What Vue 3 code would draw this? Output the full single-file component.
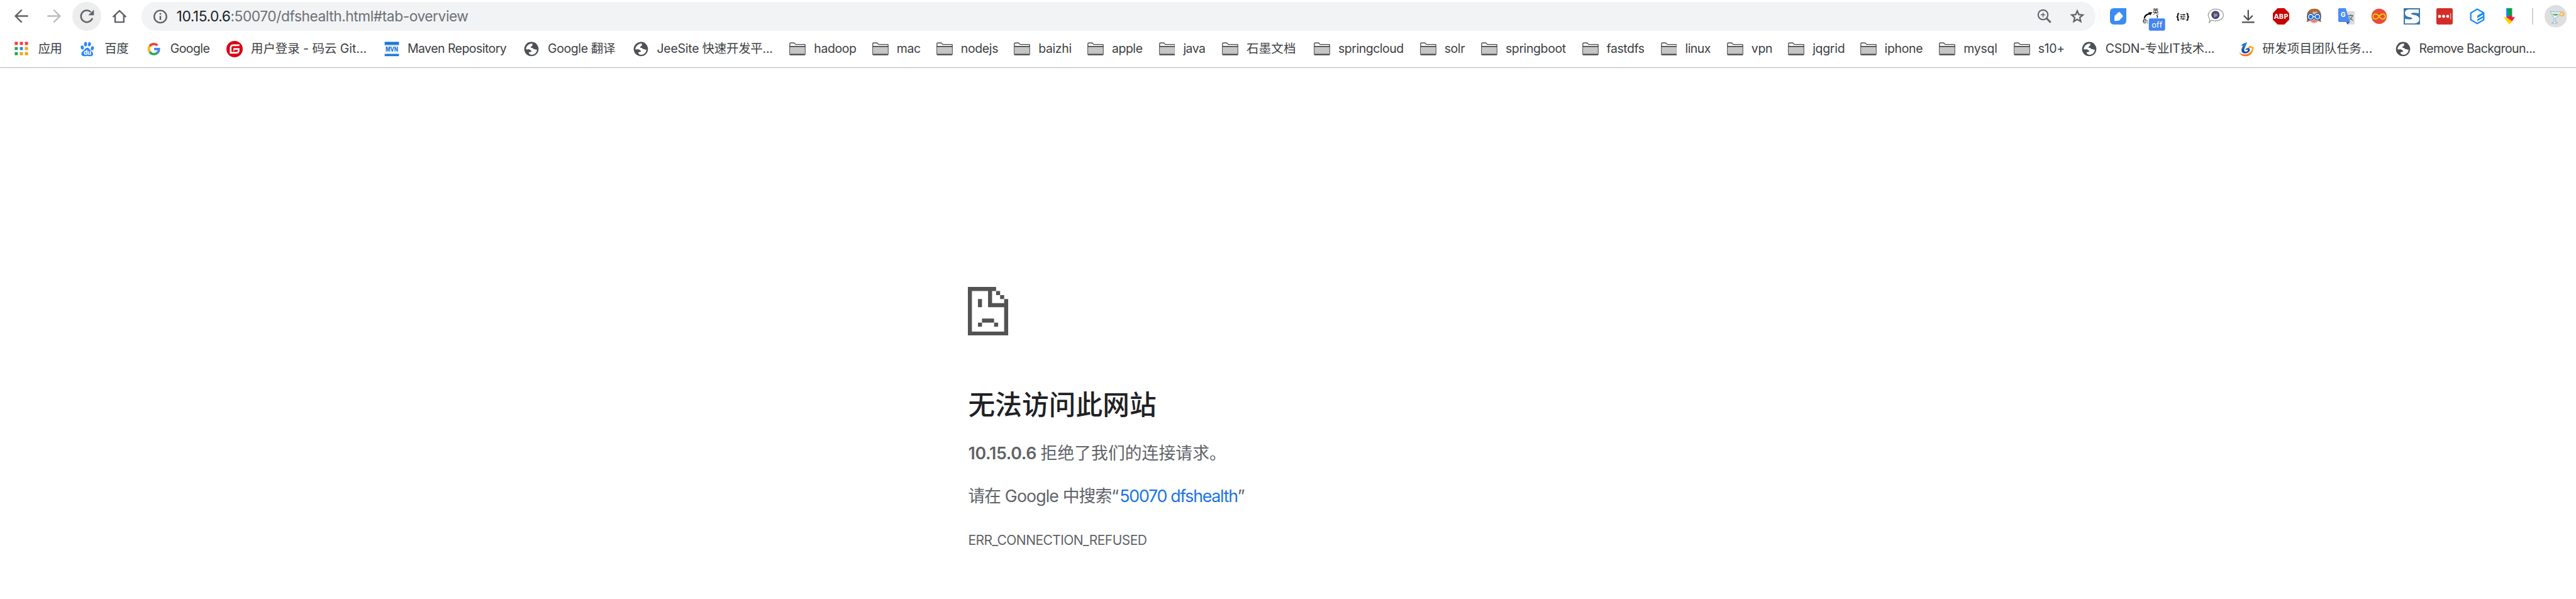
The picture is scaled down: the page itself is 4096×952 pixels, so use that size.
<script setup>
// Bookmark geometry: x = icon slot, tx/tw = label start and width
const bookmarks = [
  { icon: 'apps', text: '应用', x: 26, tx: 75, tw: 46 },
  { icon: 'baidu', text: '百度', x: 156, tx: 205, tw: 47 },
  { icon: 'google', text: 'Google', x: 286, tx: 334, tw: 77 },
  { icon: 'gitee', text: '用户登录 - 码云 Git...', x: 444, tx: 492, tw: 227 },
  { icon: 'maven', text: 'Maven Repository', x: 752, tx: 799, tw: 194 },
  { icon: 'globe', text: 'Google 翻译', x: 1026, tx: 1074, tw: 132 },
  { icon: 'globe', text: 'JeeSite 快速开发平...', x: 1240, tx: 1288, tw: 227 },
  { icon: 'folder', text: 'hadoop', x: 1548, tx: 1596, tw: 83 },
  { icon: 'folder', text: 'mac', x: 1710, tx: 1758, tw: 47 },
  { icon: 'folder', text: 'nodejs', x: 1836, tx: 1884, tw: 73 },
  { icon: 'folder', text: 'baizhi', x: 1988, tx: 2036, tw: 65 },
  { icon: 'folder', text: 'apple', x: 2132, tx: 2180, tw: 60 },
  { icon: 'folder', text: 'java', x: 2272, tx: 2320, tw: 43 },
  { icon: 'folder', text: '石墨文档', x: 2396, tx: 2444, tw: 97 },
  { icon: 'folder', text: 'springcloud', x: 2576, tx: 2624, tw: 128 },
  { icon: 'folder', text: 'solr', x: 2784, tx: 2832, tw: 40 },
  { icon: 'folder', text: 'springboot', x: 2904, tx: 2952, tw: 118 },
  { icon: 'folder', text: 'fastdfs', x: 3102, tx: 3150, tw: 74 },
  { icon: 'folder', text: 'linux', x: 3256, tx: 3304, tw: 50 },
  { icon: 'folder', text: 'vpn', x: 3386, tx: 3434, tw: 41 },
  { icon: 'folder', text: 'jqgrid', x: 3506, tx: 3554, tw: 63 },
  { icon: 'folder', text: 'iphone', x: 3648, tx: 3695, tw: 75 },
  { icon: 'folder', text: 'mysql', x: 3802, tx: 3850, tw: 66 },
  { icon: 'folder', text: 's10+', x: 3948, tx: 3996, tw: 52 },
  { icon: 'globe', text: 'CSDN-专业IT技术...', x: 4080, tx: 4128, tw: 214 },
  { icon: 'swirl', text: '研发项目团队任务...', x: 4388, tx: 4436, tw: 216 },
  { icon: 'globe', text: 'Remove Backgroun...', x: 4696, tx: 4743, tw: 228 },
].map((b, i, all) => ({
  ...b,
  lead: i ? b.x - all[i - 1].tx - all[i - 1].tw : b.x,
  gap: b.tx - b.x - 32,
}))

const extensions = [
  'tag', 'translate-off', 'braces', 'bubble', 'download', 'abp', 'girl',
  'gtranslate', 'infinity', 'letter-s', 'dots', 'cube', 'arrow',
]

// Tracks the text so that it exactly fills its parent's width
const vFit = {
  mounted(el) {
    const width = () => el.getBoundingClientRect().width
    const target = el.parentElement.getBoundingClientRect().width
    el.style.letterSpacing = '0px'
    const base = width()
    el.style.letterSpacing = '1px'
    const step = width() - base
    el.style.letterSpacing = `${(target - base) / step}px`
  },
}
</script>

<template>
  <div class="window">
    <svg class="sprite" width="0" height="0" aria-hidden="true">
      <defs>
        <linearGradient id="g-orange" x1="0" y1="1" x2="1" y2="0">
          <stop offset="0" stop-color="#ee5a22" /><stop offset="1" stop-color="#fdb515" />
        </linearGradient>
        <linearGradient id="g-blue" x1="0" y1="0" x2="0" y2="1">
          <stop offset="0" stop-color="#2e8be0" /><stop offset="1" stop-color="#173a92" />
        </linearGradient>
        <radialGradient id="g-photo">
          <stop offset="0" stop-color="#b3766c" /><stop offset=".45" stop-color="#5a5470" /><stop offset="1" stop-color="#2b3b78" />
        </radialGradient>
      </defs>

      <symbol id="i-back" viewBox="0 0 32 32">
        <path d="M28 15.500H5M16 4L4.500 15.500L16 27" fill="none" stroke="currentColor" stroke-width="3" stroke-linecap="round" />
      </symbol>
      <symbol id="i-forward" viewBox="0 0 32 32">
        <path d="M4 15.500H27M16 4L27.500 15.500L16 27" fill="none" stroke="currentColor" stroke-width="3" stroke-linecap="round" />
      </symbol>
      <symbol id="i-reload" viewBox="0 0 32 32">
        <path d="M24 7.500A11.500 11.500 0 1 0 27 19.500" fill="none" stroke="currentColor" stroke-width="3" />
        <path d="M30 3V14H19Z" fill="currentColor" />
      </symbol>
      <symbol id="i-home" viewBox="0 0 32 32">
        <path d="M4 16.500L16 5L28 16.500M7.500 14V27.300H24.500V14" fill="none" stroke="currentColor" stroke-width="3" stroke-linejoin="round" stroke-linecap="round" />
      </symbol>
      <symbol id="i-info" viewBox="0 0 32 32">
        <circle cx="16" cy="16.500" r="12" fill="none" stroke="currentColor" stroke-width="3" />
        <path d="M14.500 9.500h3v3h-3zM14.500 15h3v8h-3z" fill="currentColor" />
      </symbol>
      <symbol id="i-zoom" viewBox="0 0 32 32">
        <circle cx="13" cy="13" r="9.500" fill="none" stroke="currentColor" stroke-width="2.600" />
        <path d="M19.500 19.500L28 28" stroke="currentColor" stroke-width="3.600" />
        <path d="M13 8.500v9M8.500 13h9" stroke="currentColor" stroke-width="1.800" />
      </symbol>
      <symbol id="i-star" viewBox="0 0 32 32">
        <path d="M16 5.500L19.100 12.600L26.900 13.300L21 18.400L22.800 26L16 22L9.200 26L11 18.400L5.100 13.300L12.900 12.600Z" fill="none" stroke="currentColor" stroke-width="2.800" />
      </symbol>

      <symbol id="i-apps" viewBox="0 0 32 32">
        <path d="M3 2h6v6H3zM13 2h6v6h-6zM23 2h6v6h-6z" fill="#f93a37" />
        <path d="M3 12h6v6H3zM3 22h6v6H3z" fill="#2fa05a" />
        <path d="M13 12h6v6h-6z" fill="#1e8cfa" />
        <path d="M23 12h6v6h-6zM13 22h6v6h-6zM23 22h6v6h-6z" fill="#f2a600" />
      </symbol>
      <symbol id="i-baidu" viewBox="0 0 32 32">
        <g fill="#2e85fb">
          <ellipse cx="12.300" cy="6.500" rx="2.900" ry="4.200" />
          <ellipse cx="20" cy="6.500" rx="2.900" ry="4.200" transform="rotate(10 20 6.500)" />
          <ellipse cx="6" cy="13" rx="3" ry="4.100" transform="rotate(-12 6 13)" />
          <ellipse cx="25.600" cy="14.500" rx="3" ry="4" transform="rotate(8 25.600 14.500)" />
          <path d="M15.700 13.200c3 0 4.500 3.300 6.600 5.300c2 1.900 5 3.700 4.800 7.300c-.2 3.300-3 4.400-5.400 4.200c-2.300-.1-4-.5-6-.5s-4 .6-6 .6c-2.400 0-5.400-.9-5.500-4.700c-.1-3.400 2.800-5 4.800-6.900c2.200-2.100 3.700-5.300 6.700-5.300z" />
        </g>
      </symbol>
      <symbol id="i-google" viewBox="0 0 32 32">
        <g fill="none" stroke-width="4.600">
          <path d="M7.500 10.500A9.700 9.700 0 0 1 22.700 9" stroke="#ea4335" />
          <path d="M7.600 21.300A9.700 9.700 0 0 1 7.600 10.300" stroke="#fbbc05" />
          <path d="M22.600 23.300A9.700 9.700 0 0 1 7.500 21.200" stroke="#34a853" />
          <path d="M16.200 16H25.500A9.700 9.700 0 0 1 22.300 23.500" stroke="#4285f4" />
        </g>
      </symbol>
      <symbol id="i-gitee" viewBox="0 0 32 32">
        <circle cx="16" cy="16" r="16" fill="#da0014" />
        <path d="M25.500 8.500H13.500Q8.300 8.500 8.300 13.500V23.300H19.500Q24 23.300 24 19V15.800H14.500" fill="none" stroke="#fff" stroke-width="3.300" />
        <path d="M14.500 14.200v6" stroke="#fff" stroke-width="1.500" />
      </symbol>
      <symbol id="i-maven" viewBox="0 0 32 32">
        <path d="M2 2h28v6H2zM2 26h28v4H2z" fill="#1976d8" />
        <path d="M2 8h28v2H2zM2 23h28v3H2z" fill="#cfdde8" />
      </symbol>
      <symbol id="i-globe" viewBox="0 0 32 32">
        <circle cx="16" cy="16" r="14" fill="#4d5156" />
        <path d="M18.500 5.500C13 4.500 6.500 8.500 5.300 15.500C5 17 7 17 9 16.500C12 16 13 17.500 15 18.500C17 19.500 16 21.500 14 21.500L10.800 22.500C11 25 13.500 27.300 17 27.200C23 27 26.500 22.500 27 17L24.500 17.300C23.500 15.500 21 17 19.500 15.500C18.800 14 17 13.500 15 13.700C14 11.500 16 11 17.500 9.700C18.500 8.800 17.500 7.500 18.500 5.500Z" fill="#fff" />
      </symbol>
      <symbol id="i-folder" viewBox="0 0 32 32">
        <path d="M1 26V5.500Q1 4 2.500 4H9Q10 4 10.700 5L12.300 7H30Q31 7 31 8V26Q31 27 30 27H2Q1 27 1 26Z" fill="#fff" stroke="#464646" stroke-width="1.600" />
        <path d="M2 12h28V26H2z" fill="#c6c6c6" />
        <path d="M2 24h28V26H2z" fill="#a3a3a3" />
        <path d="M1 10h30v2H1zM1 26h30v2H1z" fill="#464646" />
      </symbol>
      <symbol id="i-swirl" viewBox="0 0 32 32">
        <path d="M1.500 21.500C5 27 17 28.500 23 22.500C27 18.500 27.500 15 25.500 13.500L19.500 14.500C19.500 10.500 22 9 25 10.500C27 11.500 28.500 12.500 31 11.500C29 14 30 21 25.500 25.500C18 33 5 31 1.500 21.500Z" fill="url(#g-orange)" />
        <path d="M17.500 2.500C14.500 4 8 4.500 5.500 9.500L9.500 9C7 14 4.500 18.500 8 22.500C11.500 26 20 24.500 22.500 19.500C24 15.500 20.500 12.500 16.500 14.500C14.500 15.500 14 17 14.200 18.500C16 16.800 19.300 16.500 18.700 18.700C17.500 21.200 12.500 22 11.800 19C11 15 16 8 17.500 2.500Z" fill="url(#g-blue)" />
      </symbol>

      <symbol id="i-tag" viewBox="0 0 32 32">
        <path d="M8 0H32V24Q32 32 24 32H8Q0 32 0 24V8Q0 0 8 0Z" fill="#398cf1" />
        <path d="M17.500 7.500Q18.500 7 19.500 8L25 14.500Q25.500 15.500 25 16.500L18 24.500L10 25Q8.500 25 8.500 23.500L9 15Z" fill="#fff" />
      </symbol>
      <symbol id="i-translate-off" viewBox="0 0 48 48">
        <path d="M2 20C3 14 7 11 12 10L11 8L19 8L15 14L13.500 12.200C9 13 6 15 4.500 20Z" fill="#000" />
        <path d="M27 14Q31 15 28 19" fill="none" stroke="#000" stroke-width="1.500" />
        <path d="M9.300 23v8" stroke="#888" stroke-width="1" />
        <rect x="12" y="20" width="32" height="24" rx="3" fill="#4285f4" />
      </symbol>
      <symbol id="i-braces" viewBox="0 0 32 32">
        <g fill="none" stroke="#111" stroke-width="2.400">
          <path d="M8.500 10.500H7.800Q6 10.500 6 12.500V14.500Q6 17 3.500 17Q6 17 6 19.500V21.500Q6 23.500 7.800 23.500H8.500" />
          <path d="M23 10.500H23.700Q25.500 10.500 25.500 12.500V14.500Q25.500 17 28 17Q25.500 17 25.500 19.500V21.500Q25.500 23.500 23.700 23.500H23" />
          <path d="M10.500 13h10.500M10.500 17h10.500M10.500 21h10.500" stroke-width="1.400" />
          <path d="M18 11v4M13 15v4M16.500 19v4" stroke-width="1.400" />
        </g>
      </symbol>
      <symbol id="i-bubble" viewBox="0 0 32 32">
        <path d="M4 20.500C-2 13 4 1.800 16.500 1.800C25 1.800 31.200 6.500 31.200 13.500C31.200 20 25 24.800 16.500 24.800C12.500 24.800 9.500 24 8 23.500L2.500 29C4.500 26 5 23 4 20.500Z" fill="#fff" stroke="#999" stroke-width="1.500" />
        <circle cx="15.700" cy="13.200" r="8" fill="url(#g-photo)" />
        <path d="M12 9l3 3l4-2l1 5l-4 1l-3 4z" fill="#d5cde0" opacity=".4" />
      </symbol>
      <symbol id="i-download" viewBox="0 0 32 32">
        <path d="M15.800 3.500V22M7.200 14.500L15.800 23L24.400 14.500M3.500 27.700H28" fill="none" stroke="#4d4d4d" stroke-width="2.700" />
      </symbol>
      <symbol id="i-abp" viewBox="0 0 32 32">
        <path d="M9.500 0H22.500L32 9.500V22.500L22.500 32H9.500L0 22.500V9.500Z" fill="#c80000" />
      </symbol>
      <symbol id="i-girl" viewBox="0 0 32 32">
        <path d="M1.800 27C4 23 2.500 17 3 12C4 4.500 10 1 17 1C25 1 30 5 30.500 13C30.500 19 29 23 31 27L24 25H9Z" fill="#a86a37" />
        <path d="M7 14Q14 12 15 6Q18 9 21 6L26 14V22Q24 30 16.500 30Q9 29 7 22Z" fill="#e9b398" />
        <path d="M11 25.200Q16.500 28 22 25.200Q16.500 23.600 11 25.200Z" fill="#c8557c" />
        <g fill="#1b7cf0" stroke="#fff" stroke-width="2">
          <circle cx="10" cy="16.700" r="4.800" /><circle cx="23.300" cy="16.700" r="4.800" />
        </g>
        <g fill="none" stroke="#1450a0" stroke-width="1.700">
          <circle cx="10" cy="16.700" r="6.300" /><circle cx="23.300" cy="16.700" r="6.300" />
        </g>
        <path d="M14.500 16.700h4" stroke="#fff" stroke-width="1.800" />
      </symbol>
      <symbol id="i-gtranslate" viewBox="0 0 32 32">
        <path d="M14 5.500H30Q32 5.500 32 7.500V30Q32 32 30 32H18Z" fill="#dcdcdc" />
        <path d="M15.500 26.500H23L18 32Z" fill="#3548c0" />
        <path d="M2 0H14.500L23 27H2Q0 27 0 25V2Q0 0 2 0Z" fill="#4c8bf5" />
        <path d="M19 14.500h10.500M24.500 12v2.500M28 15Q26 21 20.500 24M21.500 17Q24 22 29 24" fill="none" stroke="#57717c" stroke-width="1.600" />
      </symbol>
      <symbol id="i-infinity" viewBox="0 0 32 32">
        <circle cx="16" cy="16" r="15" fill="#e84c3d" />
        <path d="M16 16C13 12 11 11.200 8.600 11.300C2.500 12 2.500 20.500 8.600 21.200C11 21.300 13 20.500 16 16C19 11.700 21 11.200 23.400 11.300C29.500 12 29.500 20.500 23.400 21.200C21 21.300 19 20.500 16 16Z" fill="none" stroke="#f7c600" stroke-width="2.400" />
      </symbol>
      <symbol id="i-letter-s" viewBox="0 0 32 32">
        <rect width="32" height="32" fill="#3a78ad" />
        <path d="M29.500 2.500H12C5 2.500 2.500 5.500 2.500 9.500C2.500 14 6 16.500 12 17.500C17 18.300 18 20.500 15 21.500C12 22.300 7 21.500 2.500 20.500V30H18C26 30 30.500 27 30.500 21.500C30.500 17 27 14.500 21.500 13.500C14 12 13 10.500 16 9.500C19 8.700 25 9 29.500 10Z" fill="#fff" />
      </symbol>
      <symbol id="i-dots" viewBox="0 0 32 32">
        <rect width="32" height="32" rx="3" fill="#d32d27" />
        <g fill="#fff"><circle cx="6.200" cy="16" r="3" /><circle cx="14.200" cy="16" r="3" /><circle cx="22.200" cy="16" r="3" /></g>
        <path d="M28 10v12" stroke="#f1b5b3" stroke-width="1.600" />
      </symbol>
      <symbol id="i-cube" viewBox="0 0 32 32">
        <path d="M28.700 9.300L16 1.800L3.300 9.300V22.700L16 30.200L28.700 22.700Z" fill="none" stroke="#1989fa" stroke-width="2.800" />
        <path d="M16 16.500Q16 15 17.300 14L29 7.500V11.500L16 19.500ZM16 24Q16 22 17.300 21L28 15V18.500L16 25.700Z" fill="#1989fa" />
      </symbol>
      <symbol id="i-arrow" viewBox="0 0 32 32">
        <path d="M10 0H14L17 16L10 18.500Z" fill="#0f8fe0" />
        <path d="M12.500 0H21.500V18H16L15.500 14Z" fill="#00a63a" />
        <path d="M5 18H12L22 25.500L16 32Z" fill="#ffd400" />
        <path d="M10.500 18L20.500 13.500L21.500 17.500H27L21.500 25.500Z" fill="#ff1635" />
      </symbol>
      <symbol id="i-cocktail" viewBox="0 0 44 44">
        <circle cx="22" cy="22" r="22" fill="#dedede" />
        <circle cx="34" cy="17.500" r="5" fill="#f9bb62" /><circle cx="33" cy="17.500" r="2.600" fill="#ffdca0" />
        <path d="M11.500 12.500Q22 15 30.500 13L31.500 15Q28 22 21.500 25.500L21.800 33.500L25.500 35Q19 37.500 13.500 35L18.500 33.300L18.800 25.500Q13 19 11.500 12.500Z" fill="#edf7fd" stroke="#7fb3d8" stroke-width="1.200" />
        <path d="M15 16.500Q21 18 27.500 16.500L25.500 20Q20 22 16.500 19.500Z" fill="#7fa76a" />
      </symbol>
    </svg>

    <header class="toolbar">
      <nav class="nav">
        <span class="nav-button"><svg class="icon"><use href="#i-back" /></svg></span>
        <span class="nav-button disabled"><svg class="icon"><use href="#i-forward" /></svg></span>
        <span class="nav-button"><span class="disc"><svg class="icon"><use href="#i-reload" /></svg></span></span>
        <span class="nav-button"><svg class="icon"><use href="#i-home" /></svg></span>
      </nav>
      <div class="omnibox">
        <svg class="icon info"><use href="#i-info" /></svg>
        <div class="url"><span v-fit><b>10.15.0.6</b>:50070/dfshealth.html#tab-overview</span></div>
        <svg class="icon"><use href="#i-zoom" /></svg>
        <svg class="icon star"><use href="#i-star" /></svg>
      </div>
      <div class="extensions">
        <span v-for="name in extensions" :key="name" class="extension">
          <svg v-if="name === 'translate-off'" class="badged" viewBox="0 0 48 48">
            <use href="#i-translate-off" />
            <text class="han" x="19.500" y="10.500">英</text>
            <text class="en" x="0" y="30">e</text>
            <text class="badge" x="17.500" y="38.500">off</text>
          </svg>
          <svg v-else class="icon" viewBox="0 0 32 32">
            <use :href="`#i-${name}`" />
            <text v-if="name === 'abp'" class="abp" x="16" y="21.300">ABP</text>
            <text v-else-if="name === 'gtranslate'" class="letter-g" x="4.500" y="17.800">G</text>
          </svg>
        </span>
      </div>
      <span class="divider"></span>
      <svg class="avatar"><use href="#i-cocktail" /></svg>
    </header>

    <div class="bookmarks">
      <div v-for="b in bookmarks" :key="b.x" class="bookmark" :style="{ marginLeft: `${b.lead}px`, gap: `${b.gap}px` }">
        <svg class="icon" viewBox="0 0 32 32">
          <use :href="`#i-${b.icon}`" />
          <text v-if="b.icon === 'baidu'" class="du" x="8.500" y="27.500">du</text>
          <text v-else-if="b.icon === 'maven'" class="mvn" x="16" y="21" transform="translate(3.200 0) scale(.8 1)">MVN</text>
        </svg>
        <div class="label" :style="{ width: `${b.tw}px` }"><span v-fit>{{ b.text }}</span></div>
      </div>
    </div>

    <main class="error">
      <svg class="sad" viewBox="0 0 10 12" preserveAspectRatio="none" fill="#535353">
        <path d="M0 0H7V1H6V4H9V3H10V12H0ZM1 1V11H9V5H5V1Z" fill-rule="evenodd" />
        <path d="M7 1h1v1h-1zM8 2h1v1h-1zM2.500 3h1v2h-1zM3.500 7.800h3v1h-3zM2.500 8.800h1v1h-1zM6.500 8.800h1v1h-1z" />
      </svg>
      <h1><span v-fit>无法访问此网站</span></h1>
      <p class="refused">
        <strong class="host"><span v-fit>10.15.0.6</span></strong>
        <span class="reason"><span v-fit>拒绝了我们的连接请求。</span></span>
      </p>
      <p class="search">
        <span class="hint"><span v-fit>请在 Google 中搜索</span></span><span class="quote">“</span><a class="link"><span v-fit>50070 dfshealth</span></a><span class="quote">”</span>
      </p>
      <p class="code"><span v-fit>ERR_CONNECTION_REFUSED</span></p>
    </main>
  </div>
</template>

<style>
html,
body {
  margin: 0;
  overflow: hidden;
  background: #fff;
}
</style>

<style scoped>
.window {
  zoom: 0.81109;
  width: 5050px;
  height: 1174px;
  overflow: hidden;
  background: #fff;
  font-family: Inter, 'Noto Sans CJK SC', sans-serif;
  color: #3c4043;
  white-space: nowrap;
}

.sprite {
  position: absolute;
}

.icon {
  display: block;
  flex: none;
  width: 32px;
  height: 32px;
}

.toolbar {
  display: flex;
  align-items: center;
  height: 64px;
  color: #5f6368;
}

.nav {
  display: flex;
  margin-left: 10px;
}

.nav-button {
  display: flex;
  align-items: center;
  justify-content: center;
  width: 64px;
  height: 64px;
}

.disabled {
  color: #babcbe;
}

.disc {
  display: flex;
  align-items: center;
  justify-content: center;
  width: 56px;
  height: 56px;
  border-radius: 50%;
  background: #ededed;
}

.omnibox {
  display: flex;
  align-items: center;
  flex: none;
  box-sizing: border-box;
  width: 3830px;
  height: 56px;
  margin-left: 12px;
  padding-left: 20px;
  padding-right: 20px;
  border-radius: 28px;
  background: #f1f3f4;
}

.url {
  width: 572px;
  margin-left: 16px;
  margin-right: auto;
  font-size: 28px;
  line-height: 56px;
  color: #6d7074;
}

.url b {
  font-weight: 400;
  color: #202124;
}

.star {
  margin-left: 32px;
}

.extensions {
  display: flex;
  margin-left: 12px;
}

.extension {
  width: 64px;
  height: 32px;
  box-sizing: border-box;
  padding-left: 16px;
}

.badged {
  display: block;
  width: 48px;
  height: 48px;
}

.han {
  font-size: 12px;
  fill: #111;
}

.en {
  font-size: 14px;
  fill: #111;
}

.badge {
  font-family: Roboto, sans-serif;
  font-size: 16.5px;
  fill: #fff;
}

.abp {
  font-family: 'Open Sans', sans-serif;
  font-size: 14px;
  font-weight: 700;
  text-anchor: middle;
  fill: #fff;
}

.letter-g {
  font-size: 13px;
  font-weight: 700;
  fill: #fff;
}

.du {
  font-size: 12px;
  font-weight: 700;
  fill: #fff;
}

.mvn {
  font-size: 12.5px;
  font-weight: 800;
  text-anchor: middle;
  fill: #1976d8;
}

.divider {
  width: 2px;
  height: 32px;
  margin-left: 12px;
  background: #cfcfcf;
}

.avatar {
  width: 44px;
  height: 44px;
  margin-left: 22px;
}

.bookmarks {
  display: flex;
  align-items: center;
  height: 64px;
  padding-bottom: 4px;
  border-bottom: 2px solid #b3b3b3;
}

.bookmark {
  display: flex;
  align-items: center;
  flex: none;
}

.label {
  height: 32px;
  font-size: 24px;
  line-height: 32px;
}

.error {
  margin-left: 1898px;
  padding-top: 429px;
  color: #5f6368;
}

.sad {
  display: block;
  width: 79px;
  height: 95.5px;
}

h1 {
  width: 369px;
  margin: 98px 0 0;
  font-size: 52.6px;
  line-height: 76px;
  font-weight: 500;
  color: #202124;
}

p {
  display: flex;
  margin: 0;
  font-size: 33px;
  line-height: 48px;
}

.refused {
  margin-top: 33px;
}

.host {
  width: 134px;
  font-weight: 600;
}

.reason {
  width: 364px;
  margin-left: 8px;
}

.search {
  margin-top: 36px;
}

.hint {
  width: 281px;
}

.quote {
  width: 16px;
}

.link {
  width: 231px;
  color: #1a73e8;
}

.code {
  width: 350px;
  margin-top: 39px;
  font-size: 26px;
}
</style>
